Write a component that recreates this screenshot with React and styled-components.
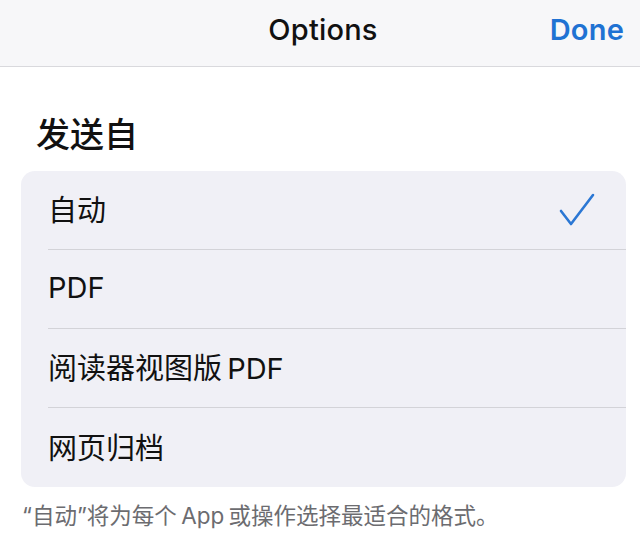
import React from 'react';
import styled, { createGlobalStyle } from 'styled-components';

const GlobalStyle = createGlobalStyle`
  html, body {
    margin: 0;
    padding: 0;
    background: #ffffff;
    font-family: Inter, "Noto Sans CJK SC", sans-serif;
    -webkit-font-smoothing: antialiased;
  }
`;

const Page = styled.div`
  width: 640px;
  height: 542px;
  overflow: hidden;
  background: #ffffff;
`;

const NavBar = styled.header`
  height: 67px;
  display: flex;
  align-items: center;
  justify-content: center;
  position: relative;
  background: #f7f7f9;
  border-bottom: 1px solid #d9d9dd;
  box-sizing: border-box;
`;

const NavTitle = styled.h1`
  margin: 0;
  font-size: 29px;
  font-weight: 500;
  color: #111111;
  letter-spacing: 0.2px;
  transform: translate(3px, -4px);
`;

const DoneButton = styled.button`
  position: absolute;
  right: 16px;
  top: 12px;
  border: 0;
  background: none;
  padding: 0;
  font-family: inherit;
  font-size: 29px;
  font-weight: 600;
  color: #1f72d3;
  letter-spacing: 0.2px;
`;

const Content = styled.main`
  padding: 42px 14px 0 21px;
`;

const SectionTitle = styled.h2`
  margin: 0 0 10px 15px;
  font-size: 34px;
  line-height: 52px;
  font-weight: 500;
  color: #111111;
`;

const Card = styled.ul`
  list-style: none;
  margin: 0;
  padding: 0;
  background: #f0f0f6;
  border-radius: 14px;
  overflow: hidden;
`;

const Row = styled.li`
  height: 79px;
  margin-left: 27px;
  padding-right: 30px;
  display: flex;
  align-items: center;
  justify-content: space-between;
  border-bottom: ${p => (p.$last ? 'none' : '1px solid #d3d3d8')};
  box-sizing: border-box;
`;

const RowLabel = styled.span`
  font-size: 29px;
  color: #111111;
  word-spacing: -3px;
  transform: translateY(-2px);
`;

const Footnote = styled.p`
  margin: 11px 0 0 1px;
  font-size: 22.5px;
  color: #6c6c70;
  word-spacing: -2px;
`;

const Check = () => (
  <svg width="38" height="36" viewBox="0 0 38 36" fill="none" style={{ marginTop: 2 }}>
    <path d="M3 18 L13 31 L35 2" stroke="#2b77d4" strokeWidth="2.6" strokeLinecap="round" strokeLinejoin="round" />
  </svg>
);

const options = ['自动', 'PDF', '阅读器视图版 PDF', '网页归档'];

export default function App() {
  return (
    <>
      <GlobalStyle />
      <Page>
        <NavBar>
          <NavTitle>Options</NavTitle>
          <DoneButton>Done</DoneButton>
        </NavBar>
        <Content>
          <SectionTitle>发送自</SectionTitle>
          <Card>
            {options.map((o, i) => (
              <Row key={o} $last={i === options.length - 1}>
                <RowLabel>{o}</RowLabel>
                {i === 0 && <Check />}
              </Row>
            ))}
          </Card>
          <Footnote>“自动”将为每个 App 或操作选择最适合的格式。</Footnote>
        </Content>
      </Page>
    </>
  );
}
